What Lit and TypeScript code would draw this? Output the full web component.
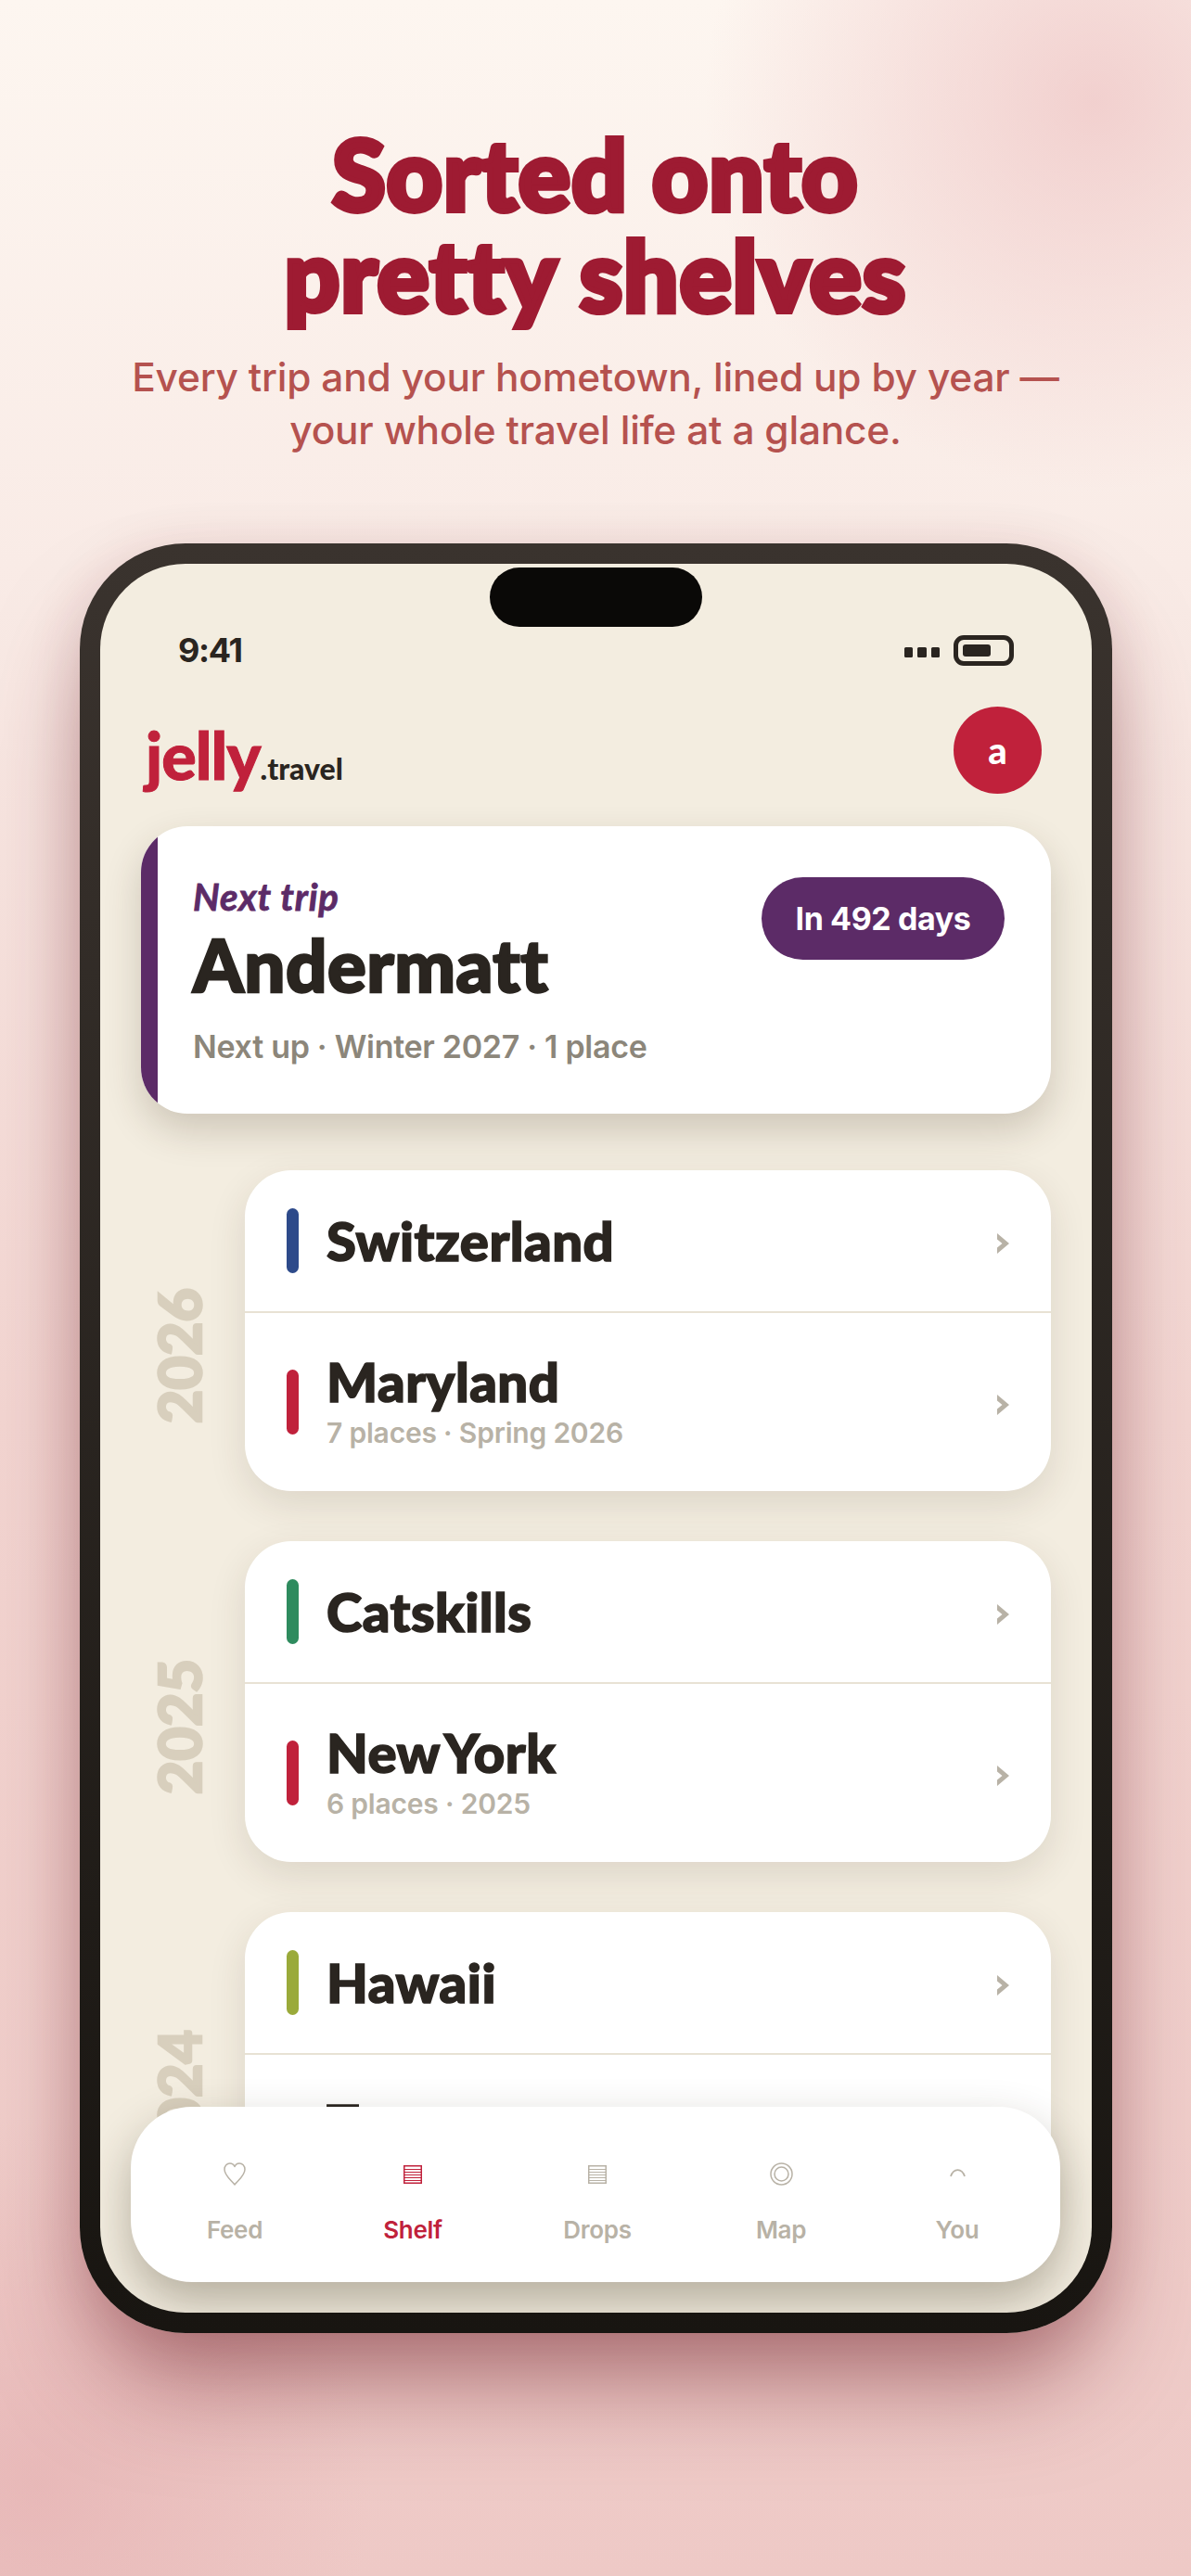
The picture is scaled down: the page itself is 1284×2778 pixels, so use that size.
import { LitElement, html, css, svg } from "lit";
import { customElement } from "lit/decorators.js";

interface Row { title: string; color: string; sub?: string }
interface Group { year: string; rows: Row[] }

const GROUPS: Group[] = [
  { year: "2026", rows: [
    { title: "Switzerland", color: "#2d4a8a" },
    { title: "Maryland", color: "#c0213b", sub: "7 places · Spring 2026" },
  ]},
  { year: "2025", rows: [
    { title: "Catskills", color: "#2e8b5e" },
    { title: "New York", color: "#c0213b", sub: "6 places · 2025" },
  ]},
  { year: "2024", rows: [
    { title: "Hawaii", color: "#9aaa3a" },
    { title: "Texas", color: "#c0213b", sub: "5 places · 2024" },
  ]},
];

const stripes = svg`
  <rect x="0.75" y="0.75" width="18.5" height="18.5" fill="none" stroke="currentColor" stroke-width="1.5"/>
  <path d="M1 4.5H19M1 7.5H19M1 10.5H19M1 13.5H19M1 16.5H19" fill="none" stroke="currentColor" stroke-width="1.2"/>`;

const NAV = [
  { label: "Feed", w: 24, h: 25, icon: svg`<path d="M12 24 C8 19 1 14 1 7.5 C1 3.5 3.8 1 6.8 1 C9 1 11 2.2 12 4.5 C13 2.2 15 1 17.2 1 C20.2 1 23 3.5 23 7.5 C23 14 16 19 12 24 Z" fill="none" stroke="currentColor" stroke-width="1.5" stroke-linejoin="round"/>` },
  { label: "Shelf", w: 20, h: 20, active: true, icon: stripes },
  { label: "Drops", w: 20, h: 20, icon: stripes },
  { label: "Map", w: 25, h: 25, icon: svg`<circle cx="12.5" cy="12.5" r="11.5" fill="none" stroke="currentColor" stroke-width="1.5"/><circle cx="12.5" cy="12.5" r="7.5" fill="none" stroke="currentColor" stroke-width="1.5"/>` },
  { label: "You", w: 17, h: 25, icon: svg`<path d="M1 15 C4 5.7 13 5.7 16 15" fill="none" stroke="currentColor" stroke-width="1.8"/>` },
];

@customElement("app-root")
export class AppRoot extends LitElement {
  static styles = css`
    :host {
      display: block; width: 1284px; height: 2778px; overflow: hidden; box-sizing: border-box;
      padding-top: 132px;
      font-family: "Lato", "Liberation Sans", sans-serif;
      background:
        radial-gradient(420px 420px at 1180px 110px, rgba(238,196,196,.75), rgba(238,196,196,0)),
        radial-gradient(360px 400px at 40px 2680px, rgba(226,170,172,.55), rgba(226,170,172,0)),
        linear-gradient(180deg, #fdf6f0 0%, #f9ebe6 22%, #f3d6d2 55%, #eec9c6 100%);
    }
    .head { text-align: center; }
    h1 {
      margin: 0; font-size: 104px; line-height: 109px; font-weight: 900; color: #9e1b32;
      -webkit-text-stroke: 6px #9e1b32; letter-spacing: 1.4px;
    }
    .lead {
      margin: 28px 0 0; font-family: "Inter", sans-serif; font-size: 42.4px; line-height: 57px; font-weight: 500;
      color: #b5524f; letter-spacing: -.2px;
    }
    .phone {
      box-sizing: border-box; width: 1113px; height: 1930px; margin: 94px 0 0 86px; padding: 22px;
      border-radius: 114px; background: linear-gradient(180deg, #3a332e 0%, #181511 100%);
      box-shadow: 0 70px 110px -20px rgba(110,30,40,.5), 0 10px 60px rgba(110,30,40,.14);
    }
    .screen {
      position: relative; height: 100%; overflow: hidden; border-radius: 92px; background: #f3ede0;
      color: #2a2520;
    }
    .island {
      position: absolute; top: 4px; left: 420px; width: 229px; height: 64px; border-radius: 32px; background: #0a0907;
    }
    .status {
      display: flex; align-items: center; justify-content: space-between; height: 42px;
      padding: 72px 84px 0;
    }
    .time { font-family: "Inter", sans-serif; font-size: 36px; font-weight: 700; letter-spacing: -1.3px; }
    .sys { display: flex; align-items: center; gap: 15px; }
    .dots { display: flex; gap: 5px; margin-top: 4px; }
    .dots i { display: block; width: 9.5px; height: 11px; border-radius: 1.5px; background: #2a2520; }
    .batt {
      box-sizing: border-box; width: 65px; height: 33px; border: 5px solid #2a2520; border-radius: 11px; padding: 5px;
    }
    .batt i { display: block; width: 30px; height: 13px; border-radius: 3px; background: #2a2520; }
    .top { display: flex; align-items: center; justify-content: space-between; height: 94px; margin-top: 40px; padding: 0 54px 0 49px; }
    .logo { display: flex; align-items: baseline; height: 94px; line-height: 94px; margin-top: 10px; }
    .logo b { font-size: 70px; font-weight: 900; color: #c0213b; letter-spacing: -1px; -webkit-text-stroke: 1px #c0213b; }
    .logo span { font-size: 32px; font-weight: 900; color: #2a2520; }
    .avatar {
      width: 95px; height: 94px; border-radius: 50%; background: #c0213b; color: #fff;
      display: flex; align-items: center; justify-content: center; font-size: 40px; font-weight: 900;
    }
    .body { padding: 35px 44px 0; }
    .next {
      display: flex; height: 310px; border-radius: 50px; overflow: hidden; background: #fff;
      box-shadow: 0 18px 40px rgba(60,45,25,.2);
    }
    .stripe { width: 18px; flex: none; background: #5c2b67; }
    .next-main { flex: 1; padding: 53px 38px 0; display: flex; justify-content: space-between; align-items: flex-start; }
    .kicker { font-size: 40px; line-height: 46px; font-style: italic; font-weight: 700; color: #5c2b67; letter-spacing: .8px; -webkit-text-stroke: .8px #5c2b67; }
    .place { font-size: 78px; line-height: 84px; font-weight: 900; margin-top: 8px; -webkit-text-stroke: 2.5px #2a2520; letter-spacing: .5px; }
    .meta { font-family: "Inter", sans-serif; font-size: 34px; line-height: 44px; font-weight: 600; color: #8c867a; margin-top: 25px; white-space: nowrap; letter-spacing: -.3px; }
    .pill {
      box-sizing: border-box; width: 262px; height: 89px; margin: 2px 12px 0 0; border-radius: 45px; background: #5c2b67;
      color: #fff; font-family: "Inter", sans-serif; font-size: 34px; font-weight: 700; letter-spacing: -.4px; display: flex; align-items: center; justify-content: center;
    }
    .group { display: flex; margin-top: 54px; }
    .group.first { margin-top: 61px; }
    .year {
      flex: none; width: 82px; margin: 127px 30px 0 0; height: max-content; writing-mode: vertical-rl; transform: rotate(180deg);
      font-size: 63px; line-height: 82px; font-weight: 900; color: #d8cfbd; text-align: right;
      -webkit-text-stroke: 2.5px #d8cfbd;
    }
    .card { flex: 1; background: #fff; border-radius: 50px; box-shadow: 0 14px 40px rgba(60,45,25,.12); }
    .row { display: flex; align-items: center; padding: 41px 45px; gap: 30px; }
    .row + .row { border-top: 2px solid #e8e2d4; }
    .bar { flex: none; width: 13px; height: 70px; border-radius: 7px; }
    .info { flex: 1; min-width: 0; }
    .title { font-size: 58px; line-height: 66px; font-weight: 900; -webkit-text-stroke: 1.6px #2a2520; letter-spacing: .5px; word-spacing: -7px; }
    .sub { font-family: "Inter", sans-serif; font-size: 30px; line-height: 44px; font-weight: 600; color: #b8b2a6; white-space: nowrap; letter-spacing: -.2px; }
    .chev { flex: none; width: 13px; height: 22px; margin-top: 6px; color: #b8b2a6; }
    .nav {
      position: absolute; left: 33px; top: 1664px; width: 1002px; height: 189px; box-sizing: border-box;
      padding: 60px 16px 0; border-radius: 66px; background: #fff;
      box-shadow: 0 22px 50px rgba(50,40,20,.32);
      display: grid; grid-template-columns: 192px 192px 206px 190px 190px;
    }
    .tab { display: flex; flex-direction: column; align-items: center; color: #b8b2a6; }
    .tab.on { color: #c0213b; }
    .ico { display: flex; align-items: center; justify-content: center; height: 25px; }
    .lab { margin-top: 31px; font-family: "Inter", sans-serif; font-size: 26px; line-height: 34px; font-weight: 600; letter-spacing: -.3px; }
  `;

  render() {
    return html`
      <div class="head">
        <h1>Sorted onto<br />pretty shelves</h1>
        <p class="lead">Every trip and your hometown, lined up by year —<br />your whole travel life at a glance.</p>
      </div>
      <div class="phone">
        <div class="screen">
          <div class="island"></div>
          <div class="status">
            <span class="time">9:41</span>
            <span class="sys"><span class="dots"><i></i><i></i><i></i></span><span class="batt"><i></i></span></span>
          </div>
          <div class="top">
            <div class="logo"><b>jelly</b><span>.travel</span></div>
            <div class="avatar">a</div>
          </div>
          <div class="body">
            <div class="next">
              <div class="stripe"></div>
              <div class="next-main">
                <div>
                  <div class="kicker">Next trip</div>
                  <div class="place">Andermatt</div>
                  <div class="meta">Next up · Winter 2027 · 1 place</div>
                </div>
                <div class="pill">In 492 days</div>
              </div>
            </div>
            ${GROUPS.map((g, i) => html`
              <div class="group ${i === 0 ? "first" : ""}">
                <div class="year">${g.year}</div>
                <div class="card">
                  ${g.rows.map(r => html`
                    <div class="row">
                      <span class="bar" style="background:${r.color}"></span>
                      <div class="info">
                        <div class="title">${r.title}</div>
                        ${r.sub ? html`<div class="sub">${r.sub}</div>` : ""}
                      </div>
                      <svg class="chev" viewBox="0 0 13 22"><path d="M0 0L13 11L0 22V15.5L5.5 11L0 6.5Z" fill="currentColor"/></svg>
                    </div>`)}
                </div>
              </div>`)}
          </div>
          <nav class="nav">
            ${NAV.map(n => html`
              <div class="tab ${n.active ? "on" : ""}">
                <span class="ico"><svg width=${n.w} height=${n.h} viewBox="0 0 ${n.w} ${n.h}">${n.icon}</svg></span>
                <span class="lab">${n.label}</span>
              </div>`)}
          </nav>
        </div>
      </div>
    `;
  }
}
